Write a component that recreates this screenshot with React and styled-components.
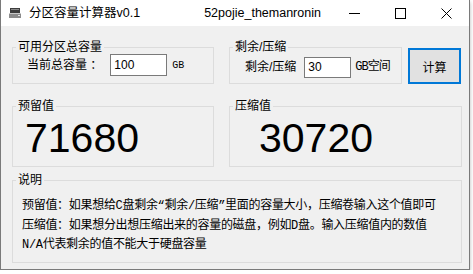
import React from 'react';
import styled, { createGlobalStyle } from 'styled-components';

const GlobalStyle = createGlobalStyle`
  html, body {
    margin: 0;
    background: #fff;
  }
`;

const uiFont = `"Liberation Sans", "Noto Sans CJK SC", sans-serif`;
const monoFont = `"Liberation Mono", "Noto Sans CJK SC", monospace`;

const Window = styled.div`
  width: 470px;
  height: 270px;
  box-sizing: border-box;
  display: flex;
  flex-direction: column;
  border: 1px solid #7a7a7a;
  border-top: none;
  box-shadow: 0 2px 4px rgba(0, 0, 0, 0.28);
  background: #f0f0f0;
  font-family: ${uiFont};
  font-size: 12px;
  color: #000;
`;

const TitleBar = styled.div`
  height: 26px;
  flex: none;
  display: flex;
  align-items: center;
  background: #fff;
`;

const AppIcon = styled.svg`
  margin-left: 7px;
  flex: none;
`;

const Title = styled.span`
  margin-left: 7px;
  font-size: 12.5px;
  line-height: 16px;
`;

const Author = styled.span`
  margin-left: 64px;
  font-size: 12.5px;
  line-height: 16px;
`;

const Spacer = styled.div`
  flex: 1;
`;

const Control = styled.div`
  width: 46px;
  height: 26px;
  display: flex;
  align-items: center;
  justify-content: center;
`;

const Client = styled.div`
  flex: 1;
  display: flex;
  flex-direction: column;
  padding: 14px 0 0 11px;
`;

const Row = styled.div`
  display: flex;
  align-items: flex-end;
  gap: ${p => p.$gap || 15}px;
  margin-top: ${p => p.$top || 0}px;
`;

const Group = styled.fieldset`
  margin: 0;
  padding: 0;
  min-width: 0;
  width: ${p => p.$w}px;
  height: ${p => p.$h}px;
  box-sizing: border-box;
  border: 1px solid #dcdcdc;
`;

const Caption = styled.legend`
  margin-left: 3px;
  padding: 0 2px;
  font-size: 12px;
  line-height: 14px;
`;

const Field = styled.div`
  display: flex;
  align-items: center;
  height: 22px;
  padding: ${p => p.$top || 0}px 0 0 ${p => p.$left}px;
`;

const Label = styled.span`
  line-height: 14px;
  margin-right: ${p => p.$gap}px;
  white-space: pre;
`;

const Input = styled.input`
  width: ${p => p.$w}px;
  height: ${p => p.$h}px;
  box-sizing: border-box;
  margin: 0 ${p => p.$gap}px 0 0;
  padding: 0 3px;
  border: 1px solid #7a7a7a;
  background: #fff;
  font-family: ${uiFont};
  font-size: 12px;
  outline: none;
`;

const Unit = styled.span`
  font-family: ${monoFont};
  font-size: 10px;
  line-height: 14px;
  padding-top: 2px;
`;

const UnitWide = styled.span`
  font-family: ${monoFont};
  font-size: 12px;
  line-height: 14px;
  letter-spacing: -1px;
`;

const Button = styled.button`
  width: 53px;
  height: 36px;
  margin-left: -9px;
  box-sizing: border-box;
  border: 2px solid #0078d7;
  background: #e1e1e1;
  font-family: ${uiFont};
  font-size: 12px;
  padding: 0;
`;

const Value = styled.div`
  padding-left: ${p => p.$left}px;
  margin-top: 2px;
  font-family: "Liberation Sans", Arial, sans-serif;
  font-size: 41px;
  line-height: 46px;
`;

const Notes = styled.div`
  padding: 10px 0 0 9px;
  font-family: ${monoFont};
  font-size: 12px;
  line-height: 19.5px;
  letter-spacing: -0.3px;
  white-space: nowrap;
`;

const App = () => {
  return (
    <>
      <GlobalStyle />
      <Window>
        <TitleBar>
          <AppIcon width="14" height="12" viewBox="0 0 14 12">
            <rect x="2" y="1" width="10" height="5" fill="#3c3c3c" />
            <rect x="3" y="2" width="8" height="1" fill="#8a8a8a" />
            <rect x="1" y="6" width="12" height="5" fill="#8c8c8c" />
            <rect x="1" y="6" width="12" height="1" fill="#c8c8c8" />
            <rect x="10" y="8" width="2" height="1" fill="#e8e8e8" />
          </AppIcon>
          <Title>分区容量计算器v0.1</Title>
          <Author>52pojie_themanronin</Author>
          <Spacer />
          <Control>
            <svg width="11" height="11" viewBox="0 0 11 11">
              <line x1="0" y1="5.5" x2="11" y2="5.5" stroke="#000" strokeWidth="1" />
            </svg>
          </Control>
          <Control>
            <svg width="11" height="11" viewBox="0 0 11 11">
              <rect x="0.5" y="0.5" width="10" height="10" fill="none" stroke="#000" strokeWidth="1" />
            </svg>
          </Control>
          <Control>
            <svg width="11" height="11" viewBox="0 0 11 11">
              <path d="M0.5 0.5 L10.5 10.5 M10.5 0.5 L0.5 10.5" stroke="#000" strokeWidth="1" />
            </svg>
          </Control>
        </TitleBar>
        <Client>
          <Row>
            <Group $w={202} $h={44}>
              <Caption>可用分区总容量</Caption>
              <Field $left={14}>
                <Label $gap={8}>当前总容量 ：</Label>
                <Input $w={57} $h={22} $gap={5} defaultValue="100" />
                <Unit>GB</Unit>
              </Field>
            </Group>
            <Group $w={173} $h={44}>
              <Caption>剩余/压缩</Caption>
              <Field $left={15} $top={2}>
                <Label $gap={8}>剩余/压缩</Label>
                <Input $w={47} $h={21} $gap={4} defaultValue="30" />
                <UnitWide>GB空间</UnitWide>
              </Field>
            </Group>
            <Button>计算</Button>
          </Row>
          <Row $top={15}>
            <Group $w={202} $h={68}>
              <Caption>预留值</Caption>
              <Value $left={12}>71680</Value>
            </Group>
            <Group $w={233} $h={68}>
              <Caption>压缩值</Caption>
              <Value $left={29}>30720</Value>
            </Group>
          </Row>
          <Row $top={6}>
            <Group $w={450} $h={90}>
              <Caption>说明</Caption>
              <Notes>
                <div>预留值：如果想给C盘剩余“剩余/压缩”里面的容量大小，压缩卷输入这个值即可</div>
                <div>压缩值：如果想分出想压缩出来的容量的磁盘，例如D盘。输入压缩值内的数值</div>
                <div>N/A代表剩余的值不能大于硬盘容量</div>
              </Notes>
            </Group>
          </Row>
        </Client>
      </Window>
    </>
  );
};

export default App;
